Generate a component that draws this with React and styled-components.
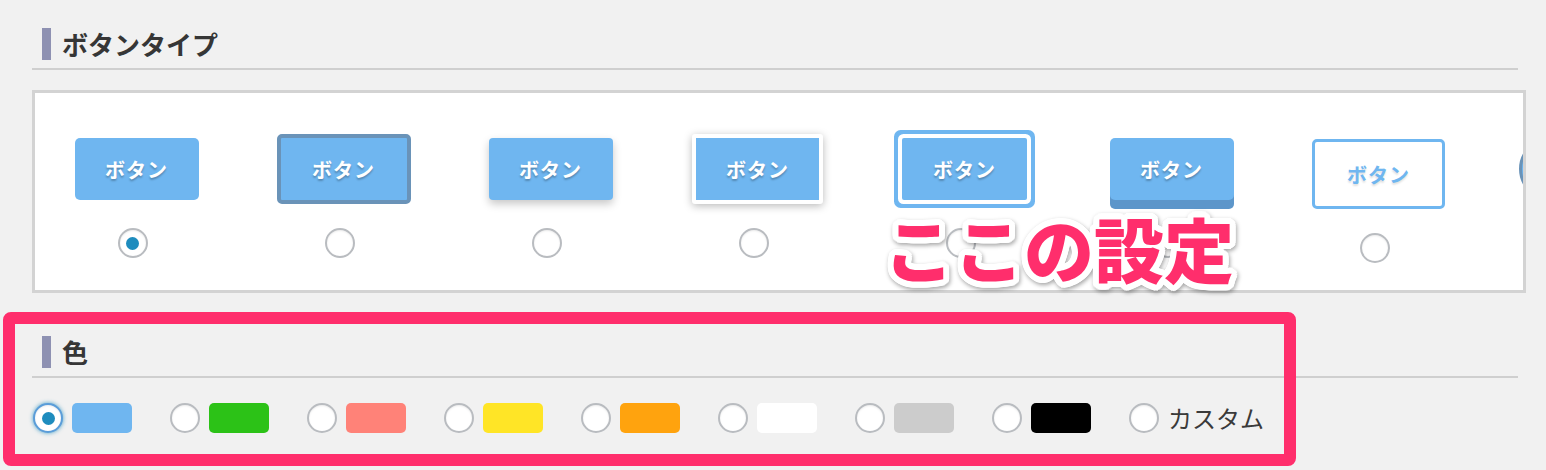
import React from "react";
import styled, { createGlobalStyle, css } from "styled-components";

const GlobalStyle = createGlobalStyle`
  body {
    margin: 0;
    background: #f1f1f1;
    font-family: "Noto Sans CJK JP", "Noto Sans", sans-serif;
    color: #333;
  }
`;

const BLUE = "#6fb6f0";

const Page = styled.div`
  position: relative;
  height: 470px;
  box-sizing: border-box;
  padding: 28px 0 0 32px;
  overflow: hidden;
`;

const Section = styled.section`
  margin-top: ${(p) => p.$gap || 0}px;
`;

const Heading = styled.h2`
  display: flex;
  align-items: center;
  gap: 11px;
  width: 1486px;
  box-sizing: border-box;
  margin: 0;
  padding: 0 0 8px 10px;
  border-bottom: 2px solid #cfcfcf;
  font-size: 26px;
  line-height: 32px;
  font-weight: 700;
  color: #363636;

  &::before {
    content: "";
    width: 9px;
    height: 32px;
    background: #8e91b2;
  }
`;

const TypeBox = styled.div`
  display: flex;
  align-items: flex-start;
  gap: 66px;
  width: 1494px;
  height: 203px;
  box-sizing: border-box;
  margin-top: 20px;
  padding: 37px 0 0 31px;
  background: #fff;
  border: 3px solid #d3d3d3;
  overflow: hidden;
`;

const TypeItem = styled.label`
  display: flex;
  flex-direction: column;
  align-items: center;
  flex-shrink: 0;
  width: 141px;
  padding-top: ${(p) => p.$drop || 0}px;
`;

const ButtonSlot = styled.div`
  display: flex;
  align-items: center;
  justify-content: center;
  width: 100%;
  height: 78px;
`;

const variants = {
  flat: css`
    width: 124px;
    height: 62px;
    border-radius: 5px;
  `,
  border: css`
    width: 126px;
    height: 62px;
    border: 4px solid #6a93b8;
    border-radius: 5px;
  `,
  shadow: css`
    width: 124px;
    height: 62px;
    border-radius: 4px;
    box-shadow: 0 4px 9px rgba(0, 0, 0, 0.22);
  `,
  frame: css`
    width: 123px;
    height: 62px;
    border: 4px solid #fff;
    border-radius: 3px;
    box-shadow: 0 2px 9px rgba(0, 0, 0, 0.28);
  `,
  double: css`
    width: 125px;
    height: 62px;
    border-radius: 2px;
    box-shadow: 0 0 0 4px #fff, 0 0 0 8px ${BLUE};
  `,
  raised: css`
    width: 124px;
    height: 62px;
    border-radius: 5px;
    box-shadow: 0 9px 0 #5d96ca;
  `,
  outline: css`
    width: 127px;
    height: 64px;
    background: #fff;
    color: ${BLUE};
    border: 3px solid ${BLUE};
    border-radius: 5px;
    text-shadow: 0 2px 2px rgba(0, 0, 0, 0.12);
  `,
  pill: css`
    width: 128px;
    height: 56px;
    border: 3px solid #6a93b8;
    border-radius: 31px;
  `,
};

const SampleButton = styled.span`
  display: flex;
  align-items: center;
  justify-content: center;
  flex-shrink: 0;
  background: ${BLUE};
  color: #fff;
  font-size: 20px;
  font-weight: 700;
  letter-spacing: 1px;
  text-shadow: 0 2px 2px rgba(0, 0, 0, 0.25);
  ${(p) => variants[p.$variant]}
`;

const Radio = styled.span`
  position: relative;
  display: inline-block;
  flex-shrink: 0;
  width: 30px;
  height: 30px;
  box-sizing: border-box;
  border-radius: 50%;
  background: #fff;
  border: 2px solid ${(p) => (p.$focus ? "#5b9dd9" : "#b9bcc0")};
  box-shadow: ${(p) =>
    p.$focus
      ? "0 0 4px rgba(30, 140, 190, 0.8), inset 0 1px 2px rgba(0,0,0,0.08)"
      : "inset 0 1px 2px rgba(0, 0, 0, 0.08)"};

  ${(p) =>
    p.$checked &&
    css`
      &::after {
        content: "";
        position: absolute;
        top: 50%;
        left: 50%;
        width: 13px;
        height: 13px;
        margin: -6.5px 0 0 -6.5px;
        border-radius: 50%;
        background: #1e8cbe;
      }
    `}
`;

const TypeRadio = styled(Radio)`
  margin: 20px 8px 0 0;
`;

const ColorRow = styled.div`
  display: flex;
  align-items: center;
  gap: 38px;
  margin-top: 25px;
  padding-left: 1px;
`;

const ColorOption = styled.label`
  display: flex;
  align-items: center;
  gap: 9px;
`;

const Swatch = styled.span`
  width: 60px;
  height: 30px;
  border-radius: 5px;
  background: ${(p) => p.$color};
`;

const CustomLabel = styled.span`
  font-size: 24px;
  line-height: 30px;
  color: #3a3a3a;
`;

const Highlight = styled.div`
  position: absolute;
  left: 3px;
  top: 312px;
  width: 1293px;
  height: 154px;
  box-sizing: border-box;
  border: 12px solid #ff2e6c;
  border-radius: 8px;
  pointer-events: none;
`;

const outline = Array.from({ length: 24 }, (_, i) => {
  const a = (i * Math.PI * 2) / 24;
  return `${(Math.cos(a) * 6).toFixed(1)}px ${(Math.sin(a) * 6).toFixed(1)}px 0 #fff`;
}).join(", ");

const Callout = styled.div`
  position: absolute;
  left: 884px;
  top: 213px;
  font-size: 70px;
  line-height: 1;
  font-weight: 900;
  color: #ff2e6c;
  white-space: nowrap;
  text-shadow: ${outline};
  filter: drop-shadow(1px 2px 2px rgba(0, 0, 0, 0.35));
`;

// the last sample is cut off by the box edge, so it carries no label
const buttonTypes = [
  { variant: "flat", label: "ボタン", checked: true },
  { variant: "border", label: "ボタン" },
  { variant: "shadow", label: "ボタン" },
  { variant: "frame", label: "ボタン" },
  { variant: "double", label: "ボタン" },
  { variant: "raised", label: "ボタン" },
  { variant: "outline", label: "ボタン", drop: 5 },
  { variant: "pill", label: "" },
];

const colors = [
  BLUE,
  "#2cc217",
  "#ff8278",
  "#ffe526",
  "#ffa30e",
  "#ffffff",
  "#cccccc",
  "#000000",
];

const App = () => (
  <>
    <GlobalStyle />
    <Page>
      <Section>
        <Heading>ボタンタイプ</Heading>
        <TypeBox>
          {buttonTypes.map((t) => (
            <TypeItem key={t.variant} $drop={t.drop}>
              <ButtonSlot>
                <SampleButton $variant={t.variant}>{t.label}</SampleButton>
              </ButtonSlot>
              <TypeRadio $checked={t.checked} />
            </TypeItem>
          ))}
        </TypeBox>
      </Section>

      <Section $gap={43}>
        <Heading>色</Heading>
        <ColorRow>
          {colors.map((c, i) => (
            <ColorOption key={c}>
              <Radio $checked={i === 0} $focus={i === 0} />
              <Swatch $color={c} />
            </ColorOption>
          ))}
          <ColorOption>
            <Radio />
            <CustomLabel>カスタム</CustomLabel>
          </ColorOption>
        </ColorRow>
      </Section>

      <Highlight />
      <Callout>ここの設定</Callout>
    </Page>
  </>
);

export default App;
